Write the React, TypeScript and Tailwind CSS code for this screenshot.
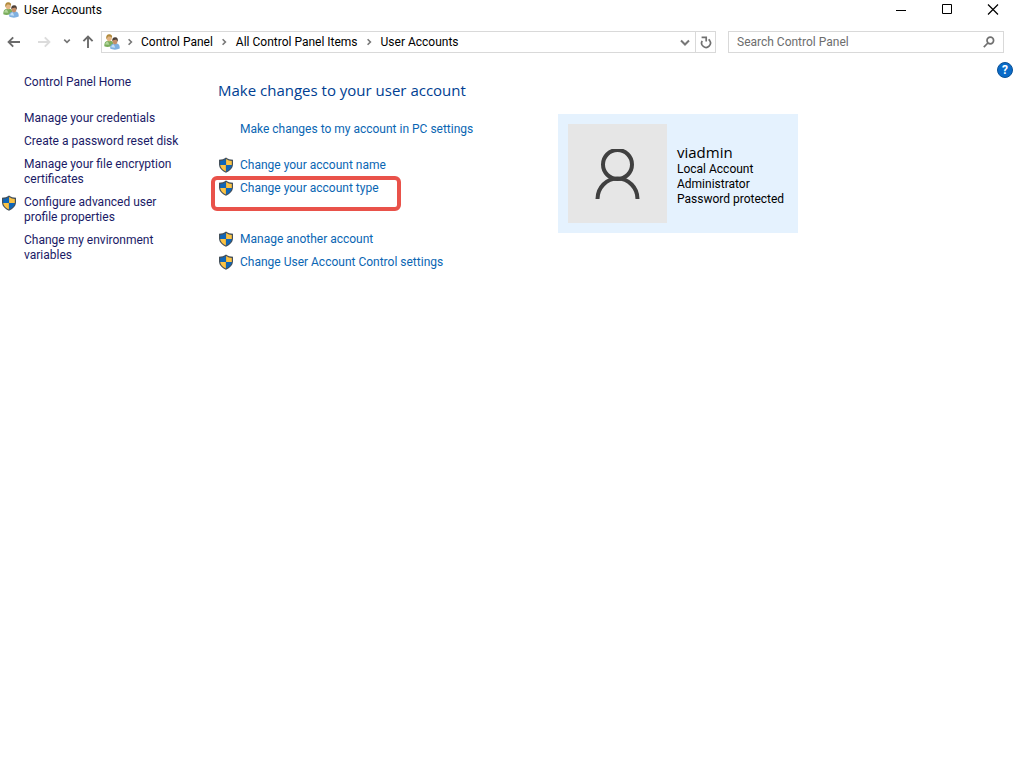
import type { ReactNode } from 'react';

// UAC shield, four quarters inside a dark outline
function ShieldIcon() {
  return (
    <svg className="h-4 w-4 shrink-0" viewBox="0 0 16 16" aria-hidden="true">
      <path d="M8 0.4C6 1.9 3.6 2.6 1 2.7V7.6C1.2 11.4 4 14 8 15.8C12 14 14.8 11.4 15 7.6V2.7C12.4 2.6 10 1.9 8 0.4Z" fill="#44505a" />
      <path d="M7.9 1.9C6.1 3.1 4.3 3.7 2.2 3.9V7.9H7.9Z" fill="#0f66b8" />
      <path d="M8.1 1.9C9.9 3.1 11.7 3.7 13.8 3.9V7.9H8.1Z" fill="#fcc343" />
      <path d="M7.9 8.1H2.2C2.5 11 4.6 13 7.9 14.5Z" fill="#fcc343" />
      <path d="M8.1 8.1H13.8C13.5 11 11.4 13 8.1 14.5Z" fill="#0f66b8" />
    </svg>
  );
}

// Two people, green shirt behind blue shirt
function UsersIcon() {
  return (
    <svg className="h-4 w-4 shrink-0" viewBox="0 0 16 16" aria-hidden="true">
      <path d="M0.3 12.2C0.1 8.8 1.4 7 4 6.7L7.4 7C9 7.6 9.4 9 9.2 11.6C6.5 13 2.5 13.4 0.3 12.2Z" fill="#7aad5c" />
      <path d="M1.2 10.6C1.4 8.8 2.2 7.9 3.8 7.6L5.4 10.8Z" fill="#b3d69a" />
      <ellipse cx="5.2" cy="4.1" rx="2.6" ry="3.3" fill="#e3b684" />
      <path d="M2.3 5.2C1.8 2 3 0.2 5.2 0.2C7.6 0.2 8.5 1.8 8 4C7 2.6 5.6 2.4 4 2.6C3.4 3.4 3.2 4.4 2.3 5.2Z" fill="#b08a3c" />
      <path d="M6.2 14.6C5.9 11.6 7.4 9.9 9.8 9.5L13 9.6C15.2 10.3 15.9 12 15.7 14.6C13 16.1 8.8 16.1 6.2 14.6Z" fill="#7fb0e0" />
      <path d="M7.2 13.3C7.4 11.6 8.3 10.7 9.8 10.4L11.2 13.8Z" fill="#c4dff5" />
      <ellipse cx="11" cy="7.2" rx="2.4" ry="3.1" fill="#c58f68" />
      <path d="M8.4 7.4C7.9 4.8 9 3.3 11.1 3.3C13.5 3.3 14.3 4.9 13.6 7.8C13 7 12.8 6 12.2 5.6C10.8 5.9 9.3 5.7 8.4 7.4Z" fill="#4c4038" />
    </svg>
  );
}

function Chevron({ down = false }: { down?: boolean }) {
  return (
    <svg
      className={down ? 'h-2 w-2 shrink-0 rotate-90' : 'h-2 w-2 shrink-0'}
      viewBox="0 0 8 8"
      fill="none"
      stroke="#777777"
      strokeWidth="1.6"
      aria-hidden="true"
    >
      <path d="M1.6 1.2L4.4 4L1.6 6.8" />
    </svg>
  );
}

function ArrowIcon({ color, className = '' }: { color: string; className?: string }) {
  return (
    <svg className={`h-3.5 w-3.5 ${className}`} viewBox="0 0 14 14" fill="none" stroke={color} strokeWidth="1.9" aria-hidden="true">
      <path d="M13 7H1.6M6.2 2.4L1.6 7L6.2 11.6" />
    </svg>
  );
}

function WindowButton({ label, children }: { label: string; children: ReactNode }) {
  return (
    <button type="button" aria-label={label} className="flex h-5 w-10 items-center justify-center">
      <svg className="h-3 w-3" viewBox="0 0 12 12" fill="none" stroke="#000000" aria-hidden="true">
        {children}
      </svg>
    </button>
  );
}

function TitleBar() {
  return (
    <header className="flex h-5 items-center pl-[3px]">
      <UsersIcon />
      <h1 className="ml-[5px] flex-1">User Accounts</h1>
      <div className="flex gap-1.5">
        <WindowButton label="Minimize">
          <path d="M1 6.5H11" />
        </WindowButton>
        <WindowButton label="Maximize">
          <path d="M1.5 0.5H10.5V9.5H1.5Z" />
        </WindowButton>
        <WindowButton label="Close">
          <path d="M1 0.5L11 10.5M11 0.5L1 10.5" strokeWidth="1.2" />
        </WindowButton>
      </div>
    </header>
  );
}

const crumbs = ['Control Panel', 'All Control Panel Items', 'User Accounts'];

function AddressRow() {
  return (
    <div className="mt-[11px] flex h-[22px] items-center pr-[9px]">
      <div className="flex w-[101px] shrink-0 items-center pl-[7px]">
        <button type="button" aria-label="Back">
          <ArrowIcon color="#6b6b6b" />
        </button>
        <button type="button" aria-label="Forward" className="ml-4">
          <ArrowIcon color="#dcdcdc" className="rotate-180" />
        </button>
        <button type="button" aria-label="Recent locations" className="ml-3">
          <Chevron down />
        </button>
        <button type="button" aria-label="Up" className="ml-2.5">
          <ArrowIcon color="#6b6b6b" className="rotate-90" />
        </button>
      </div>

      <nav aria-label="Breadcrumb" className="flex h-full min-w-0 flex-1 items-center border border-[#d9d9d9] pl-0.5">
        <UsersIcon />
        <ol className="flex flex-1 items-center gap-0.5 whitespace-nowrap">
          {crumbs.map((crumb) => (
            <li key={crumb} className="flex items-center">
              <span className="flex w-[21px] justify-center">
                <Chevron />
              </span>
              <a href="#">{crumb}</a>
            </li>
          ))}
        </ol>
        <button type="button" aria-label="Previous locations" className="flex h-full w-5 items-center justify-center">
          <svg className="h-3 w-3" viewBox="0 0 12 12" fill="none" stroke="#777777" strokeWidth="2" aria-hidden="true">
            <path d="M2 4.5L6 8.5L10 4.5" />
          </svg>
        </button>
        <button type="button" aria-label="Refresh" className="flex h-full w-5 items-center justify-center border-l border-[#d9d9d9]">
          <svg className="h-3.5 w-3.5" viewBox="0 0 14 14" fill="none" stroke="#707070" strokeWidth="1.7" aria-hidden="true">
            <path d="M3.2 5.8A4.4 4.4 0 1 0 10.6 5.4L9.6 4.4" />
            <path d="M2.6 2.3H7.2V6.6" />
          </svg>
        </button>
      </nav>

      <label className="ml-3 flex h-full w-[276px] shrink-0 items-center border border-[#d9d9d9] pl-2 pr-2">
        <input
          type="search"
          aria-label="Search Control Panel"
          placeholder="Search Control Panel"
          className="min-w-0 flex-1 outline-none placeholder:text-[#6d6d6d]"
        />
        <svg className="h-3 w-3" viewBox="0 0 12 12" fill="none" stroke="#707070" strokeWidth="1.7" aria-hidden="true">
          <circle cx="7.3" cy="4.5" r="3.3" />
          <path d="M4.9 7L0.8 11.2" />
        </svg>
      </label>
    </div>
  );
}

const sideLinks = [
  { label: 'Manage your credentials' },
  { label: 'Create a password reset disk' },
  { label: 'Manage your file encryption certificates' },
  { label: 'Configure advanced user profile properties', shield: true },
  { label: 'Change my environment variables' },
];

function Sidebar() {
  return (
    <aside className="w-[218px] shrink-0 pt-[13px] pr-9 leading-[15px] text-[#1a1a66]">
      <a href="#" className="ml-6 block">
        Control Panel Home
      </a>
      <ul className="mt-[21px] space-y-2">
        {sideLinks.map((link) => (
          <li key={link.label} className="flex">
            <span className="w-6 shrink-0 pl-px">{link.shield && <ShieldIcon />}</span>
            <a href="#">{link.label}</a>
          </li>
        ))}
      </ul>
    </aside>
  );
}

function TaskLink({ label, highlighted = false }: { label: string; highlighted?: boolean }) {
  return (
    <li className="relative flex h-4 items-center">
      <ShieldIcon />
      <a href="#" className="ml-1.5">
        {label}
      </a>
      {highlighted && (
        <span className="pointer-events-none absolute -top-1 -left-[7px] h-[35px] w-[190px] rounded-md border-4 border-[#e9524a]" />
      )}
    </li>
  );
}

function AccountTasks() {
  return (
    <section className="w-[340px] shrink-0 pt-[18px] text-[#0a66b3]">
      <h2 className="font-['Open_Sans',sans-serif] text-[15px] leading-5 text-[#003e92]">Make changes to your user account</h2>
      <a href="#" className="mt-[22px] ml-[22px] block leading-[15px]">
        Make changes to my account in PC settings
      </a>
      <ul className="mt-5 space-y-[7px]">
        <TaskLink label="Change your account name" />
        <TaskLink label="Change your account type" highlighted />
      </ul>
      <ul className="mt-[35px] space-y-[7px]">
        <TaskLink label="Manage another account" />
        <TaskLink label="Change User Account Control settings" />
      </ul>
    </section>
  );
}

function AccountCard() {
  return (
    <section className="mt-[52px] flex w-60 shrink-0 items-center gap-2.5 self-start bg-[#e5f2fe] p-2.5">
      <div className="flex h-[99px] w-[99px] shrink-0 items-center justify-center bg-[#e6e6e6]">
        <svg className="h-[50px] w-[45px]" viewBox="0 0 45 50" fill="none" stroke="#404040" strokeWidth="4" aria-hidden="true">
          <circle cx="22.5" cy="15.5" r="14.5" />
          <path d="M2.5 50A20 20.5 0 0 1 42.5 50" />
        </svg>
      </div>
      <div className="pt-px leading-[15px] whitespace-nowrap text-black">
        <p className="font-['Open_Sans',sans-serif] text-[15px] leading-5">viadmin</p>
        <p>Local Account</p>
        <p>Administrator</p>
        <p>Password protected</p>
      </div>
    </section>
  );
}

export default function App() {
  return (
    <div className="min-h-screen bg-white font-[Roboto,'Open_Sans',sans-serif] text-xs text-black">
      <TitleBar />
      <AddressRow />
      <div className="mt-[9px] flex">
        <Sidebar />
        <main className="flex min-w-0 flex-1">
          <AccountTasks />
          <AccountCard />
        </main>
        <button
          type="button"
          aria-label="Help"
          className="h-4 w-4 shrink-0 rounded-full border border-[#0a5196] bg-[#0a6bc8] text-xs leading-[14px] font-bold text-white"
        >
          ?
        </button>
      </div>
    </div>
  );
}
